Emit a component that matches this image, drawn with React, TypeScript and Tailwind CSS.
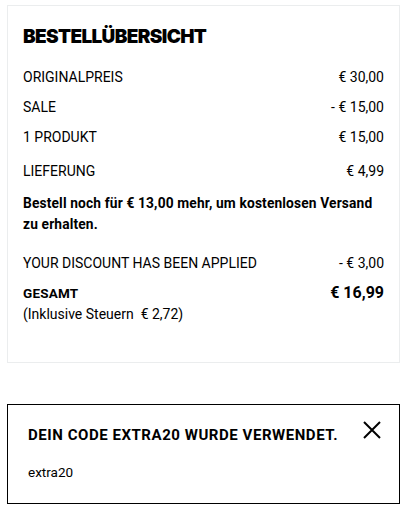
type Row = { label: string; value: string };

const priceRows: Row[] = [
  { label: "ORIGINALPREIS", value: "€ 30,00" },
  { label: "SALE", value: "- € 15,00" },
  { label: "1 PRODUKT", value: "€ 15,00" },
];

function PriceRow({ row }: { row: Row }) {
  return (
    <div className="flex h-[30px] items-center justify-between">
      <span>{row.label}</span>
      <span>{row.value}</span>
    </div>
  );
}

export default function App() {
  return (
    <div
      className="min-h-[510px] w-full bg-white px-[7px] pt-[5px] text-[14px] text-black"
      style={{ fontFamily: "Roboto, 'Liberation Sans', sans-serif" }}
    >
      {/* order summary */}
      <section className="h-[358px] border border-[#ebedee] px-[15px] pt-[19px]">
        <h2
          className="h-[24px] text-[19px] font-black leading-[24px] tracking-[-0.65px]"
          style={{ fontFamily: "Inter, 'Liberation Sans', sans-serif" }}
        >
          BESTELLÜBERSICHT
        </h2>

        <div className="mt-[13px]">
          {priceRows.map((row) => (
            <PriceRow key={row.label} row={row} />
          ))}
        </div>

        <div className="mt-[4px]">
          <PriceRow row={{ label: "LIEFERUNG", value: "€ 4,99" }} />
        </div>

        <p className="mt-[7px] text-[13.75px] font-bold leading-[21px] tracking-[0.15px]">
          Bestell noch für € 13,00 mehr, um kostenlosen Versand zu erhalten.
        </p>

        <div className="mt-[13px]">
          <PriceRow row={{ label: "YOUR DISCOUNT HAS BEEN APPLIED", value: "- € 3,00" }} />
        </div>

        <div className="mt-[4px] flex items-start justify-between">
          <span className="text-[13.5px] font-bold leading-[22px] tracking-[0.2px]">GESAMT</span>
          <span className="text-[16px] font-bold leading-[22px]">€ 16,99</span>
        </div>
        <p className="leading-[20px]">(Inklusive Steuern&nbsp; € 2,72)</p>
      </section>

      {/* applied code notice */}
      <section className="mt-[41px] h-[100px] border border-black pl-[20px] pr-[18px] pt-[16px]">
        <div className="flex items-start justify-between">
          <span className="mt-[2px] text-[15px] font-bold leading-[24px] tracking-[0.55px]">
            DEIN CODE EXTRA20 WURDE VERWENDET.
          </span>
          <svg width="18" height="18" viewBox="0 0 18 18" className="shrink-0">
            <path d="M1 1L17 17M17 1L1 17" stroke="black" strokeWidth="2" fill="none" />
          </svg>
        </div>
        <p className="mt-[15px] text-[13.5px] leading-[20px]">extra20</p>
      </section>
    </div>
  );
}
